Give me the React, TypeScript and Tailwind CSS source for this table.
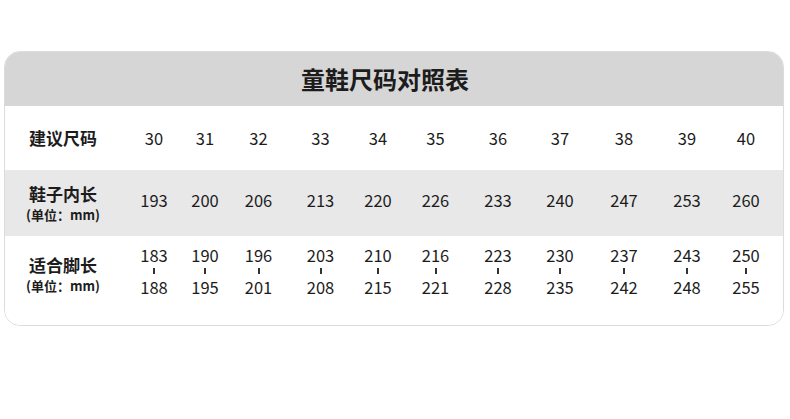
const sizes = ['30', '31', '32', '33', '34', '35', '36', '37', '38', '39', '40'];
const insole = ['193', '200', '206', '213', '220', '226', '233', '240', '247', '253', '260'];
const feet: [string, string][] = [
  ['183', '188'],
  ['190', '195'],
  ['196', '201'],
  ['203', '208'],
  ['210', '215'],
  ['216', '221'],
  ['223', '228'],
  ['230', '235'],
  ['237', '242'],
  ['243', '248'],
  ['250', '255'],
];

const cols =
  'grid grid-cols-[121px_56px_46px_61px_63px_52px_63px_62px_62px_66px_60px_58px_1fr]';
const cjk = "font-['Noto_Sans_CJK_SC',sans-serif]";
const num = `${cjk} text-[16.5px] leading-[16px] text-[#1c1c1c]`;

function Label({ title, unit }: { title: string; unit?: boolean }) {
  return (
    <div className={`flex flex-col items-center pr-[5px] ${cjk} text-[#1c1c1c]`}>
      <span className="text-[17px] leading-[20px] font-bold">{title}</span>
      {unit && <span className="mt-[3px] text-[13px] leading-[16px] font-bold">(单位：mm)</span>}
    </div>
  );
}

export default function App() {
  return (
    <div className="min-h-screen bg-white pt-[51px] pl-[4px]">
      <div className="w-[780px] rounded-[16px] border border-[#dcdcdc] overflow-hidden">
        {/* Title */}
        <div className={`h-[54px] bg-[#d6d6d6] flex items-center justify-center pr-[18px] ${cjk}`}>
          <h1 className="text-[24px] font-bold text-[#1c1c1c] leading-none">童鞋尺码对照表</h1>
        </div>

        {/* Sizes */}
        <div className={`${cols} h-[64px] items-center bg-white`}>
          <Label title="建议尺码" />
          {sizes.map((s) => (
            <span key={s} className={`text-center ${num}`}>
              {s}
            </span>
          ))}
        </div>

        {/* Insole length */}
        <div className={`${cols} h-[66px] items-center bg-[#e8e8e8]`}>
          <Label title="鞋子内长" unit />
          {insole.map((s) => (
            <span key={s} className={`text-center mb-[6px] ${num}`}>
              {s}
            </span>
          ))}
        </div>

        {/* Foot length */}
        <div className={`${cols} h-[89px] items-start pt-[11px] bg-white`}>
          <div className="mt-[8px]">
            <Label title="适合脚长" unit />
          </div>
          {feet.map(([a, b]) => (
            <div key={a} className={`flex flex-col items-center ${num}`}>
              <span>{a}</span>
              <span className="mt-[5px] w-[2px] h-[6px] bg-[#333]" />
              <span className="mt-[5px]">{b}</span>
            </div>
          ))}
        </div>
      </div>
    </div>
  );
}
